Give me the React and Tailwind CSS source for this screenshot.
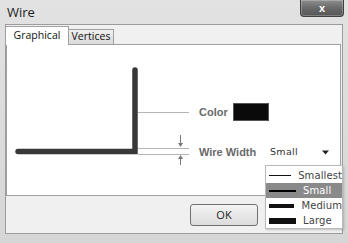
import React from "react";

const ui = { fontFamily: '"Open Sans", "Noto Sans", sans-serif' };
const label = { fontFamily: '"Liberation Sans", Arial, sans-serif' };
const list = { fontFamily: '"DejaVu Sans", Verdana, sans-serif' };

function Diagram() {
  return (
    <svg width="186" height="150" className="shrink-0">
      {/* color leader */}
      <line x1="131" y1="67.5" x2="182" y2="67.5" stroke="#b5b5b5" strokeWidth="1" />
      {/* width guides */}
      <line x1="131" y1="103.5" x2="182" y2="103.5" stroke="#b5b5b5" strokeWidth="1" />
      <line x1="131" y1="109.5" x2="182" y2="109.5" stroke="#b5b5b5" strokeWidth="1" />
      <line x1="173.5" y1="90" x2="173.5" y2="98" stroke="#777" strokeWidth="1" />
      <polygon points="171,98 176,98 173.5,102" fill="#777" />
      <line x1="173.5" y1="114" x2="173.5" y2="120" stroke="#777" strokeWidth="1" />
      <polygon points="171,114 176,114 173.5,110" fill="#777" />
      {/* the wire */}
      <path
        d="M11 106.5 L128 106.5 L128 25"
        fill="none"
        stroke="#383838"
        strokeWidth="5.5"
        strokeLinecap="round"
        strokeLinejoin="miter"
      />
    </svg>
  );
}

function WidthOption({ name, thick, active }) {
  return (
    <div
      className={`flex items-center h-[15px] pl-[3px] ${active ? "bg-[#8a8a8a] text-white" : "text-[#444]"}`}
    >
      <div className="w-[27px] flex items-center">
        <div className={`w-full ${thick} ${active ? "bg-black" : "bg-[#111]"}`} />
      </div>
      <span className="ml-[7px] text-[10px] tracking-[0.1px] whitespace-nowrap" style={list}>
        {name}
      </span>
    </div>
  );
}

export default function App() {
  return (
    <div
      className="relative w-[348px] h-[243px] overflow-hidden bg-gradient-to-b from-[#e2e2e2] to-[#d6d6d6] flex flex-col"
      style={ui}
    >
      {/* Title bar */}
      <div className="h-[24px] flex items-start justify-between shrink-0">
        <span className="pl-[7px] pt-[3px] text-[13px] leading-[18px] text-[#1c1c1c]">Wire</span>
        <div className="mr-[4px] w-[44px] h-[17px] rounded-b-[4px] border border-t-0 border-[#3f3f3f] bg-gradient-to-b from-[#8e8e8e] via-[#6a6a6a] to-[#555] flex items-center justify-center shadow-[inset_0_0_0_1px_rgba(255,255,255,0.25)]">
          <span className="text-white font-bold text-[11px] leading-none" style={label}>
            x
          </span>
        </div>
      </div>

      {/* Client area */}
      <div className="ml-[5px] w-[338px] h-[210px] bg-[#f0f0f0] border border-[#9c9c9c] flex flex-col">
        {/* Tabs */}
        <div className="h-[19px] flex items-end shrink-0">
          <div className="relative z-10 -mb-px -ml-px w-[64px] h-[19px] bg-white border border-b-0 border-[#a0a0a0] flex items-center justify-center text-[10.5px] text-[#111]">
            Graphical
          </div>
          <div className="w-[45px] h-[15px] border border-l-0 border-b-0 border-[#a0a0a0] bg-gradient-to-b from-[#f0f0f0] to-[#dadada] flex items-center justify-center text-[10.5px] text-[#111]">
            Vertices
          </div>
        </div>

        {/* Panel */}
        <div className="w-[335px] h-[152px] bg-white border border-[#a0a0a0] flex shrink-0">
          <Diagram />
          <div className="pl-[6px] flex flex-col">
            <div className="mt-[58px] flex items-center h-[18px]">
              <span className="w-[34px] text-[11px] font-bold text-[#6a6a6a]" style={label}>
                Color
              </span>
              <div className="w-[36px] h-[18px] bg-[#0a0a0a] border border-[#555]" />
            </div>
            <div className="mt-[24px] flex items-center h-[15px]">
              <span className="w-[71px] text-[11px] font-bold text-[#6a6a6a]" style={label}>
                Wire Width
              </span>
              <div className="w-[59px] flex items-center justify-between">
                <span className="text-[9.5px] text-[#333] tracking-[0.3px]" style={list}>
                  Small
                </span>
                <svg width="7" height="5">
                  <polygon points="0,0.5 7,0.5 3.5,4.5" fill="#222" />
                </svg>
              </div>
            </div>
          </div>
        </div>

        {/* Button row */}
        <div className="flex-1">
          <button className="ml-[184px] mt-[8px] w-[68px] h-[22px] rounded-[3px] border border-[#707070] bg-gradient-to-b from-[#f4f4f4] to-[#dcdcdc] text-[11px] text-[#222]">
            OK
          </button>
        </div>
      </div>

      {/* Width dropdown list */}
      <div className="absolute left-[265px] top-[165px] w-[78px] h-[64px] overflow-hidden bg-white border border-[#b8b8b8] pt-[2px] shadow-[1px_1px_2px_rgba(0,0,0,0.2)]">
        <WidthOption name="Smallest" thick="h-px" />
        <WidthOption name="Small" thick="h-[2px]" active />
        <WidthOption name="Medium" thick="h-[4px]" />
        <WidthOption name="Large" thick="h-[6px]" />
      </div>
    </div>
  );
}
